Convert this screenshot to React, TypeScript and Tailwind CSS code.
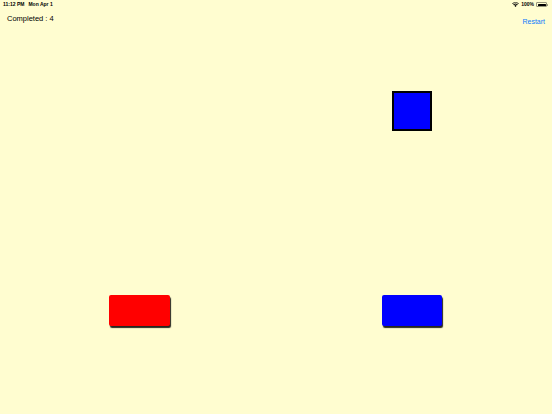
import React from 'react';

const Wifi = () => (
  <svg width="7" height="5" viewBox="0 0 14 10" className="fill-black">
    <path d="M7 10 L4.6 7.4 A3.4 3.4 0 0 1 9.4 7.4 Z" />
    <path d="M2.4 5.2 A6.6 6.6 0 0 1 11.6 5.2 L10.4 6.4 A5 5 0 0 0 3.6 6.4 Z" />
    <path d="M0.2 3 A9.8 9.8 0 0 1 13.8 3 L12.6 4.2 A8.2 8.2 0 0 0 1.4 4.2 Z" />
  </svg>
);

const Battery = () => (
  <div className="flex items-center">
    <div className="w-[11px] h-[5px] rounded-[1px] border-[0.5px] border-black/40 p-[0.5px]">
      <div className="w-full h-full bg-black rounded-[0.5px]" />
    </div>
    <div className="w-[1px] h-[2px] bg-black/40 rounded-r-[0.5px]" />
  </div>
);

export default function App() {
  return (
    <div
      className="relative w-[552px] h-[414px] bg-[#fffdd0] overflow-hidden text-black"
      style={{ fontFamily: '"Liberation Sans", Arial, sans-serif' }}
    >
      {/* status bar */}
      <div className="flex items-center justify-between h-[9px] pl-[3px] pr-[4px] text-[5px] font-bold">
        <div className="flex gap-[4px]">
          <span>11:12 PM</span>
          <span>Mon Apr 1</span>
        </div>
        <div className="flex items-center gap-[2px]">
          <Wifi />
          <span>100%</span>
          <Battery />
        </div>
      </div>

      {/* header */}
      <div className="flex items-start justify-between pl-[7px] pr-[7px]">
        <span className="text-[7.5px] leading-[10px] mt-[5px]">Completed : 4</span>
        <button className="text-[7px] leading-[9px] mt-[8px] text-[#0a7aff]">Restart</button>
      </div>

      {/* game canvas */}
      <div className="absolute left-[392px] top-[91px] w-[40px] h-[40px] bg-[#0000ff] border-2 border-black" />
      <div className="absolute left-[109px] top-[295px] w-[61px] h-[31px] bg-[#ff0000] rounded-[2px] shadow-[1px_2px_1px_rgba(0,0,0,0.85)]" />
      <div className="absolute left-[382px] top-[295px] w-[60px] h-[31px] bg-[#0000ff] rounded-[2px] shadow-[1px_2px_1px_rgba(0,0,0,0.85)]" />
    </div>
  );
}
